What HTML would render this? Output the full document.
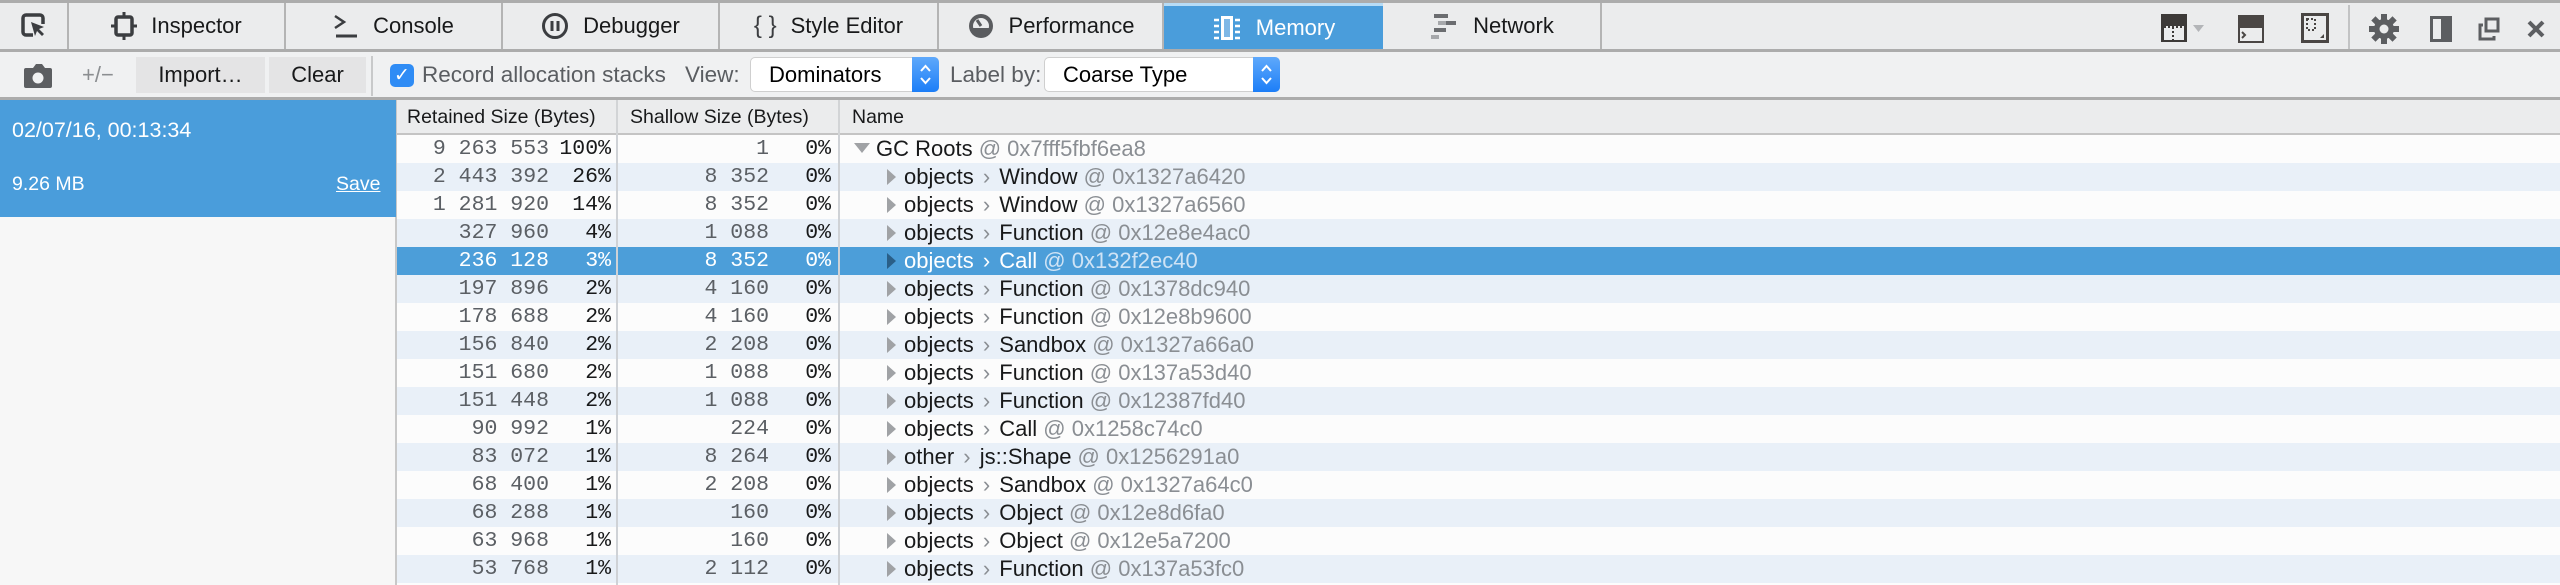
<!DOCTYPE html>
<html><head><meta charset="utf-8"><style>
*{margin:0;padding:0;box-sizing:border-box}
body{width:2560px;height:585px;overflow:hidden;background:#fcfcfc;font-family:"Liberation Sans",sans-serif;position:relative}
.abs{position:absolute}
#tabs{left:0;top:0;width:2560px;height:52px;background:#ebeced;border-top:3px solid #acacac;border-bottom:3px solid #acacac}
.tab{position:absolute;top:0;height:46px;border-right:2px solid #b4b4b4;font-size:22px;color:#18191a;display:flex;align-items:center;justify-content:center;gap:14px}
.tab svg{display:block}
#tb{left:0;top:52px;width:2560px;height:48px;background:#f0f1f2;border-bottom:3px solid #acacac;font-size:22.5px}
.btn{position:absolute;top:5px;height:36px;background:#e4e4e5;display:flex;align-items:center;justify-content:center;font-size:22px;color:#18191a}
.sel{position:absolute;top:5px;height:35px;background:#fff;border:1px solid #cfcfcf;border-radius:5px;font-size:22px;color:#000;padding-left:18px;line-height:33px}
.sel .ar{position:absolute;right:-1px;top:-1px;width:27px;height:35px;background:linear-gradient(#5fa9fb,#1c7ef7);border-radius:0 5px 5px 0}
#left{left:0;top:100px;width:397px;height:485px;background:#f7f7f7;border-right:2px solid #c8c8c8}
#blue{left:0;top:100px;width:396px;height:117px;background:#4a9ddb;color:#fff}
#hdr{left:397px;top:100px;width:2163px;height:35px;background:#ebeced;border-bottom:2px solid #c4c4c4;font-size:19.5px;color:#18191a}
.row{position:absolute;left:397px;width:2163px;height:28px;font-size:22px}
.row.a{background:#fcfcfc}.row.b{background:#e9f0f8}.row.s{background:#4c9ed9;color:#fff}
.n{position:absolute;font-family:"Liberation Mono",monospace;font-size:21.5px;top:2px;text-align:right;color:#5b5f64;white-space:pre}
.p{position:absolute;font-family:"Liberation Mono",monospace;font-size:21.5px;top:2px;text-align:right;color:#18191a;white-space:pre}
.s .n,.s .p{color:#fff}
.nm{position:absolute;left:490px;top:1px;white-space:pre;color:#18191a}
.nm .g{color:#8a8e93}.nm .c{color:#8a8e93;margin:0 3px}
.s .nm,.s .nm .g,.s .nm .c{color:#fff}
.s .nm .g{color:#cfe3f5}
.tri{display:inline-block;width:0;height:0;border-top:8px solid transparent;border-bottom:8px solid transparent;border-left:9px solid #a0a2a5;margin-right:8px;vertical-align:-1px}
.s .tri{border-left-color:#2a5f88}
.vl{position:absolute;top:100px;width:2px;height:485px;background:#cfd2d6}
</style></head><body>
<div id="tabs" class="abs">
 <div class="tab" style="left:0;width:69px"><svg width="26" height="26" viewBox="0 0 26 26"><path d="M12 22H5a3 3 0 0 1-3-3V5a3 3 0 0 1 3-3h14a3 3 0 0 1 3 3v6" fill="none" stroke="#3b3d40" stroke-width="3.5"/><path d="M10 9l13 5-5 2 5 5-2 2-5-5-2 5z" fill="#3b3d40"/></svg></div>
 <div class="tab" style="left:69px;width:217px"><svg width="26" height="28" viewBox="0 0 26 28"><rect x="5" y="5" width="16" height="18" rx="2" fill="none" stroke="#3b3d40" stroke-width="3.5"/><path d="M13 0v5M13 23v5M0 14h5M21 14h5" stroke="#3b3d40" stroke-width="3"/></svg>Inspector</div>
 <div class="tab" style="left:286px;width:217px"><svg width="26" height="26" viewBox="0 0 26 26"><path d="M2 3l9 6-9 6" fill="none" stroke="#3b3d40" stroke-width="2.5"/><path d="M3 23h21" stroke="#3b3d40" stroke-width="3"/></svg>Console</div>
 <div class="tab" style="left:503px;width:217px"><svg width="28" height="28" viewBox="0 0 28 28"><circle cx="14" cy="14" r="11.5" fill="none" stroke="#3b3d40" stroke-width="3"/><path d="M11 9v10M17 9v10" stroke="#3b3d40" stroke-width="3"/></svg>Debugger</div>
 <div class="tab" style="left:720px;width:219px"><span style="font-size:24px;color:#3b3d40">{ }</span>Style Editor</div>
 <div class="tab" style="left:939px;width:225px"><svg width="28" height="28" viewBox="0 0 28 28"><circle cx="14" cy="14" r="12" fill="#5a5c5f"/><circle cx="14" cy="14" r="8" fill="#ebeced"/><path d="M6 16h16a8 8 0 0 1-16 0z" fill="#5a5c5f"/><path d="M14 14l-4-6" stroke="#5a5c5f" stroke-width="3"/></svg>Performance</div>
 <div class="tab" style="left:1164px;width:219px;background:#4a9ddb;color:#fff;border-top:3px solid #b7dcf6;border-right:none"><svg width="30" height="30" viewBox="0 0 30 30"><rect x="9" y="3" width="12" height="24" fill="#fff"/><rect x="12" y="6" width="6" height="18" fill="#7fb8e6"/><path d="M2 7h5M2 13h5M2 19h5M2 25h5M23 7h5M23 13h5M23 19h5M23 25h5" stroke="#fff" stroke-width="2.5"/></svg>Memory</div>
 <div class="tab" style="left:1383px;width:219px"><svg width="30" height="26" viewBox="0 0 30 26"><path d="M5 3h14M9 10h18M5 17h12M2 24h8" stroke="#6b6d70" stroke-width="4"/><path d="M9 10h8M2 24h8" stroke="#a6a8ab" stroke-width="4"/></svg>Network</div>
 <svg class="abs" style="left:2160px;top:9px" width="60" height="32" viewBox="0 0 60 32"><rect x="1" y="2" width="26" height="28" fill="#3d3a38"/><rect x="4" y="14" width="20" height="14" fill="#ebeced"/><path d="M4 15h20M13 15v13" stroke="#3d3a38" stroke-width="2" stroke-dasharray="2 2"/><path d="M33 13h11l-5.5 7z" fill="#b3b5b8"/></svg>
 <svg class="abs" style="left:2237px;top:11px" width="28" height="30" viewBox="0 0 28 30"><rect x="1" y="1" width="26" height="28" fill="#4a4644"/><rect x="3" y="14" width="22" height="13" fill="#ebeced"/><path d="M5 18l3 3-3 3" stroke="#4a4644" stroke-width="2" fill="none"/></svg>
 <svg class="abs" style="left:2300px;top:9px" width="30" height="32" viewBox="0 0 30 32"><rect x="1" y="1" width="28" height="30" fill="#4a4644"/><rect x="4" y="4" width="22" height="24" fill="#ebeced"/><rect x="7" y="7" width="8" height="11" fill="none" stroke="#4a4644" stroke-width="2" stroke-dasharray="2 2"/><path d="M24 22v4h-4z" fill="#4a4644"/></svg>
 <div class="abs" style="left:2348px;top:2px;width:2px;height:44px;background:#c2c3c4"></div>
 <svg class="abs" style="left:2369px;top:11px" width="30" height="30" viewBox="0 0 30 30"><g fill="#5c5e61"><circle cx="15" cy="15" r="10"/><path d="M12 0h6v6h-6zM12 24h6v6h-6zM0 12h6v6H0zM24 12h6v6h-6z"/><path d="M12 0h6v6h-6zM12 24h6v6h-6zM0 12h6v6H0zM24 12h6v6h-6z" transform="rotate(45 15 15)"/></g><circle cx="15" cy="15" r="4.5" fill="#ebeced"/></svg>
 <svg class="abs" style="left:2430px;top:13px" width="22" height="26" viewBox="0 0 22 26"><rect x="1.5" y="1.5" width="19" height="23" fill="none" stroke="#5c5e61" stroke-width="3"/><rect x="11" y="2" width="9" height="22" fill="#5c5e61"/></svg>
 <svg class="abs" style="left:2478px;top:14px" width="22" height="24" viewBox="0 0 22 24"><rect x="8" y="2" width="12" height="12" fill="none" stroke="#5c5e61" stroke-width="3"/><path d="M5 8H2v14h14v-3" fill="none" stroke="#5c5e61" stroke-width="3"/></svg>
 <svg class="abs" style="left:2527px;top:17px" width="18" height="18" viewBox="0 0 18 18"><path d="M2 2l14 14M16 2L2 16" stroke="#5c5e61" stroke-width="4"/></svg>
</div>
<div id="tb" class="abs">
 <svg class="abs" style="left:23px;top:11px" width="30" height="26" viewBox="0 0 30 26"><path d="M3 5h7l3-4h6l3 4h5a2 2 0 0 1 2 2v16a2 2 0 0 1-2 2H3a2 2 0 0 1-2-2V7a2 2 0 0 1 2-2z" fill="#5c5e61"/><circle cx="15" cy="15" r="5.5" fill="#f0f1f2"/></svg>
 <div class="abs" style="left:82px;top:10px;color:#8b8e91;font-size:22px">+/−</div>
 <div class="btn" style="left:136px;width:129px">Import…</div>
 <div class="btn" style="left:269px;width:97px">Clear</div>
 <div class="abs" style="left:371px;top:4px;width:2px;height:40px;background:#c8c9ca"></div>
 <div class="abs" style="left:390px;top:12px;width:24px;height:23px;border-radius:5px;background:#2f8cf5;color:#fff;font-size:19px;text-align:center;line-height:23px">✓</div>
 <div class="abs" style="left:422px;top:10px;color:#5a5d61">Record allocation stacks</div>
 <div class="abs" style="left:685px;top:10px;color:#5a5d61">View:</div>
 <div class="sel" style="left:750px;width:189px">Dominators<div class="ar"><svg width="27" height="35" viewBox="0 0 27 35"><path d="M9 14l4.5-5 4.5 5M9 21l4.5 5 4.5-5" stroke="#fff" stroke-width="2" fill="none"/></svg></div></div>
 <div class="abs" style="left:950px;top:10px;color:#5a5d61">Label by:</div>
 <div class="sel" style="left:1044px;width:236px">Coarse Type<div class="ar"><svg width="27" height="35" viewBox="0 0 27 35"><path d="M9 14l4.5-5 4.5 5M9 21l4.5 5 4.5-5" stroke="#fff" stroke-width="2" fill="none"/></svg></div></div>
</div>
<div id="left" class="abs"></div>
<div id="blue" class="abs">
 <div class="abs" style="left:12px;top:18px;font-size:21.5px">02/07/16, 00:13:34</div>
 <div class="abs" style="left:12px;top:73px;font-size:19.5px">9.26 MB</div>
 <div class="abs" style="left:336px;top:73px;font-size:19.5px;text-decoration:underline">Save</div>
</div>
<div id="hdr" class="abs">
 <div class="abs" style="left:10px;top:6px">Retained Size (Bytes)</div>
 <div class="abs" style="left:233px;top:6px">Shallow Size (Bytes)</div>
 <div class="abs" style="left:455px;top:6px">Name</div>
 <div class="abs" style="left:219px;top:0;width:2px;height:35px;background:#d2d4d6"></div>
 <div class="abs" style="left:441px;top:0;width:2px;height:35px;background:#d2d4d6"></div>
</div>
<div id="rows"></div>
<div class="vl" style="left:616px;top:135px;height:450px"></div>
<div class="vl" style="left:838px;top:135px;height:450px"></div>
<script>
var d=[["9 263 553","100%","1","0%","GC Roots","","@ 0x7fff5fbf6ea8",1],
["2 443 392","26%","8 352","0%","objects","Window","@ 0x1327a6420"],
["1 281 920","14%","8 352","0%","objects","Window","@ 0x1327a6560"],
["327 960","4%","1 088","0%","objects","Function","@ 0x12e8e4ac0"],
["236 128","3%","8 352","0%","objects","Call","@ 0x132f2ec40"],
["197 896","2%","4 160","0%","objects","Function","@ 0x1378dc940"],
["178 688","2%","4 160","0%","objects","Function","@ 0x12e8b9600"],
["156 840","2%","2 208","0%","objects","Sandbox","@ 0x1327a66a0"],
["151 680","2%","1 088","0%","objects","Function","@ 0x137a53d40"],
["151 448","2%","1 088","0%","objects","Function","@ 0x12387fd40"],
["90 992","1%","224","0%","objects","Call","@ 0x1258c74c0"],
["83 072","1%","8 264","0%","other","js::Shape","@ 0x1256291a0"],
["68 400","1%","2 208","0%","objects","Sandbox","@ 0x1327a64c0"],
["68 288","1%","160","0%","objects","Object","@ 0x12e8d6fa0"],
["63 968","1%","160","0%","objects","Object","@ 0x12e5a7200"],
["53 768","1%","2 112","0%","objects","Function","@ 0x137a53fc0"]];
var h="";
d.forEach(function(r,i){
 var cls=i==4?"s":(i%2?"b":"a");
 var name;
 if(r[7]){name='<div class="nm" style="left:457px"><span style="display:inline-block;width:0;height:0;border-left:8px solid transparent;border-right:8px solid transparent;border-top:10px solid #a0a2a5;margin-right:6px;vertical-align:3px"></span>GC Roots <span class="g">'+r[6]+'</span></div>';}
 else name='<div class="nm"><span class="tri"></span>'+r[4]+' <span class="c">›</span> '+r[5]+' <span class="g">'+r[6]+'</span></div>';
 h+='<div class="row '+cls+'" style="top:'+(135+28*i)+'px"><div class="n" style="right:2011px">'+r[0]+'</div><div class="p" style="right:1949px">'+r[1]+'</div><div class="n" style="right:1791px">'+r[2]+'</div><div class="p" style="right:1729px">'+r[3]+'</div>'+name+'</div>';
});
document.getElementById("rows").innerHTML=h;
</script>
</body></html>
